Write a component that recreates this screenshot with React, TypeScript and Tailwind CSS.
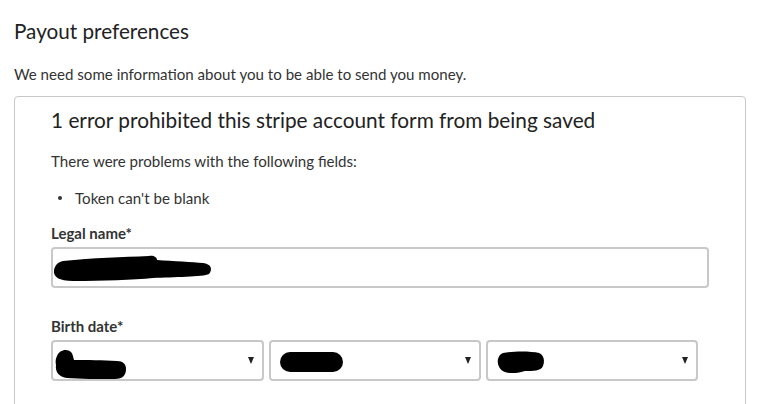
import React from "react";

const font = { fontFamily: "Lato, 'Noto Sans', sans-serif" };

function Chevron() {
  return (
    <svg width="6" height="7" viewBox="0 0 6 7" className="shrink-0">
      <path d="M0 0 H6 L3 7 Z" fill="#222" />
    </svg>
  );
}

export default function App() {
  return (
    <div className="w-[779px] h-[404px] overflow-hidden bg-white text-[#333] font-['Lato',sans-serif]" style={font}>
      <div className="pl-[14px] pt-[19px]">
        <h2 className="text-[20.7px] leading-[24px] text-[#222]">Payout preferences</h2>
        <p className="mt-[22px] text-[15.1px] leading-[18px] text-[#333]">
          We need some information about you to be able to send you money.
        </p>
        <div className="mt-[13px] w-[732px] h-[400px] border border-[#c8c8c8] rounded-[4px] pl-[36px] pt-[9px]">
          <h3 className="text-[20.8px] leading-[28px] text-[#222]">
            1 error prohibited this stripe account form from being saved
          </h3>
          <p className="mt-[18px] text-[15.1px] leading-[18px]">There were problems with the following fields:</p>
          <ul className="mt-[19px] pl-[7px]">
            <li className="flex items-center text-[15.1px] leading-[18px]">
              <span className="w-[4px] h-[4px] rounded-full bg-[#333] mr-[13px]" />
              Token can't be blank
            </li>
          </ul>
          <div className="mt-[17px] text-[15px] leading-[18px] font-bold text-[#333]">Legal name*</div>
          <div className="mt-[5px] w-[658px] h-[41px] border-2 border-[#c8c8c8] rounded-[4px] flex items-center">
            <svg width="160" height="28" viewBox="0 0 160 28" className="mt-[2px]">
              <path
                d="M10 6 C40 3 70 2 96 1 C100 0 104 2 104 5 C120 6 140 7 150 8 C158 9 160 14 156 19 C150 22 120 22 100 23 C80 25 50 26 20 26 C6 26 0 22 1 15 C2 10 5 7 10 6 Z"
                fill="#000"
              />
            </svg>
          </div>
          <div className="mt-[29px] text-[15px] leading-[18px] font-bold text-[#333]">Birth date*</div>
          <div className="mt-[5px] flex gap-[5px]">
            <div className="w-[213px] h-[41px] border-2 border-[#c8c8c8] rounded-[4px] flex items-center justify-between pr-[8px]">
              <svg width="76" height="34" viewBox="0 0 76 34" className="mt-[8px]">
                <path
                  d="M4 8 C6 2 14 0 18 4 C20 6 20 9 21 12 C34 12 50 12 64 13 C70 13 73 16 73 21 C73 27 70 31 62 31 C46 31 26 31 14 30 C6 29 2 24 3 17 C2 13 3 10 4 8 Z"
                  fill="#000"
                />
              </svg>
              <Chevron />
            </div>
            <div className="w-[212px] h-[41px] border-2 border-[#c8c8c8] rounded-[4px] flex items-center justify-between pl-[9px] pr-[8px]">
              <div className="w-[63px] h-[20px] rounded-full bg-black mt-[2px]" />
              <Chevron />
            </div>
            <div className="w-[212px] h-[41px] border-2 border-[#c8c8c8] rounded-[4px] flex items-center justify-between pl-[9px] pr-[8px]">
              <svg width="48" height="24" viewBox="0 0 48 24" className="mt-[4px]">
                <path
                  d="M6 2 C16 0 34 0 42 2 C47 4 48 10 46 15 C44 20 36 20 28 20 C22 22 14 23 8 21 C2 19 0 12 1 8 C2 5 3 3 6 2 Z"
                  fill="#000"
                />
              </svg>
              <Chevron />
            </div>
          </div>
        </div>
      </div>
    </div>
  );
}
